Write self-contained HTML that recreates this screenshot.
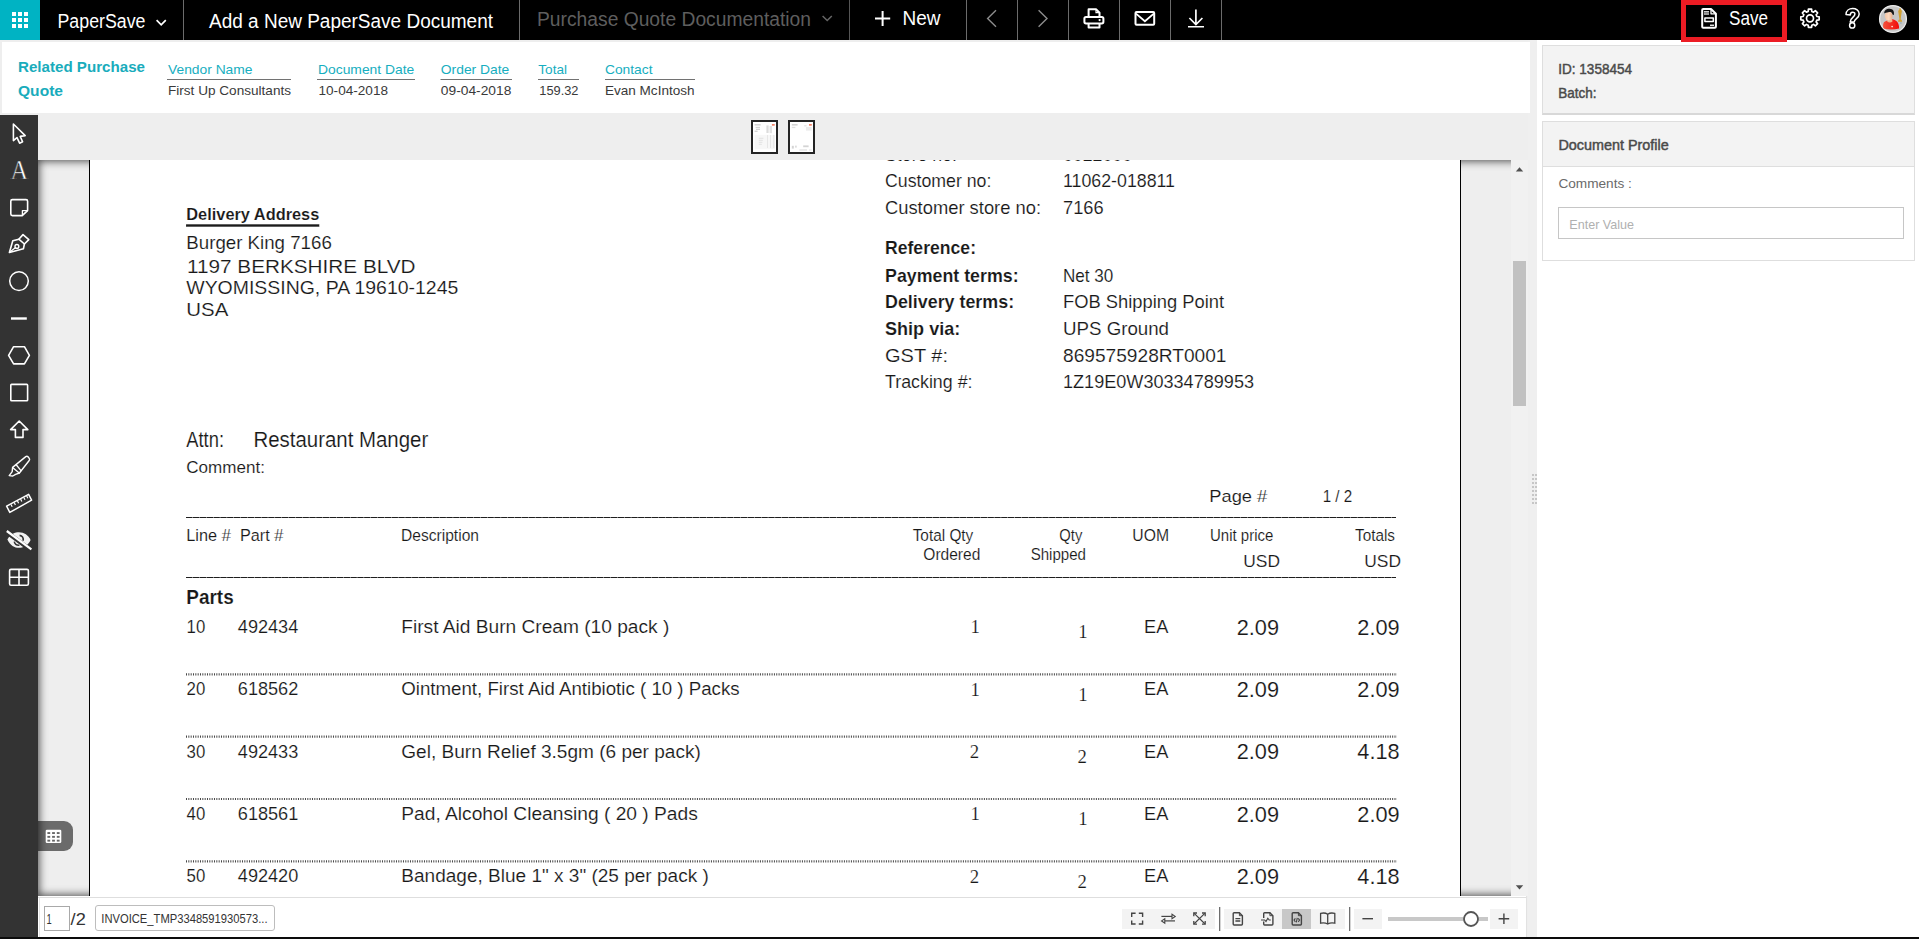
<!DOCTYPE html>
<html lang="en">
<head>
<meta charset="utf-8">
<title>PaperSave - Add a New PaperSave Document</title>
<style>
html,body{margin:0;padding:0;}
body{width:1919px;height:939px;overflow:hidden;background:#eee;position:relative;font-family:"Liberation Sans",sans-serif;}
.abs{position:absolute;box-sizing:border-box;}
#topbar{left:0;top:0;width:1919px;height:40px;background:#000;}
#apps{left:0;top:0;width:40px;height:40px;background:#00b3c3;}
.sep{top:0;width:1px;height:40px;background:#6b6b6b;}
#savebox{left:1681px;top:0;width:106px;height:42px;border:5px solid #ec1c24;}
#header{left:2px;top:42px;width:1528px;height:71px;background:#fff;}
#right{left:1537px;top:40px;width:382px;height:897px;background:#fff;}
#card1{left:1542px;top:45px;width:373px;height:70px;background:#f3f3f3;border:1px solid #dedede;border-bottom:2px solid #d8d8d8;}
#card2{left:1542px;top:121px;width:373px;height:140px;background:#fff;border:1px solid #dedede;}
#card2h{left:1543px;top:122px;width:371px;height:45px;background:#f3f3f3;border-bottom:1px solid #dedede;}
#cinput{left:1558px;top:207px;width:346px;height:32px;background:#fff;border:1px solid #c6c6c6;}
#sidebar{left:0;top:115px;width:38px;height:822px;background:#333;}
#viewer{left:38px;top:160px;width:1490px;height:736px;background:#eee;overflow:hidden;}
#vshadow{left:0;top:0;width:1490px;height:736px;box-shadow:inset 0 0 9px 1px rgba(0,0,0,.7);}
#page{left:51px;top:-20px;width:1372px;height:800px;background:#fff;border-left:1px solid #000;border-right:1px solid #000;}
#vtrack{left:1511px;top:160px;width:17px;height:736px;background:#f1f1f1;}
#vthumb{left:1513px;top:261px;width:13px;height:145px;background:#c1c1c1;}
#tab{left:0;top:661px;width:35px;height:30px;background:#6b6b6b;border-radius:0 9px 9px 0;}
#bottombar{left:38px;top:896px;width:1489px;height:41px;background:#fff;border-right:1px solid #e2e2e2;}
#bbline{left:38px;top:897px;width:1488px;height:1px;background:#dedede;}
#band{left:1528px;top:40px;width:9px;height:897px;background:#efefef;}
#blackline{left:0;top:937px;width:1919px;height:2px;background:#0c0c0c;}
.tbg{top:909px;height:20px;background:#f3f3f3;}
#pgin{left:44px;top:906px;width:26px;height:25px;background:#fff;border:1px solid #a9a9a9;}
#fname{left:95px;top:905px;width:180px;height:26px;background:#fff;border:1px solid #bdbdbd;border-radius:3px;}
.thumb{top:120px;width:27px;height:34px;background:#fff;border:2px solid #242424;}
svg{position:absolute;left:0;top:0;}
svg text{font-family:"Liberation Sans",sans-serif;white-space:pre;}
svg text.sf{font-family:"Liberation Serif",serif;}
</style>
</head>
<body>
<div class="abs" id="topbar"></div>
<div class="abs" id="apps"></div>
<div class="abs sep" style="left:183px"></div>
<div class="abs sep" style="left:519px"></div>
<div class="abs sep" style="left:849px;background:#555"></div>
<div class="abs sep" style="left:966px"></div>
<div class="abs sep" style="left:1017px"></div>
<div class="abs sep" style="left:1068px"></div>
<div class="abs sep" style="left:1119px"></div>
<div class="abs sep" style="left:1170px"></div>
<div class="abs sep" style="left:1221px"></div>
<div class="abs" id="band"></div>
<div class="abs" id="header"></div>
<div class="abs" id="right"></div>
<div class="abs" id="savebox"></div>
<div class="abs" id="card1"></div>
<div class="abs" id="card2"></div>
<div class="abs" id="card2h"></div>
<div class="abs" id="cinput"></div>
<div class="abs thumb" style="left:751px"></div>
<div class="abs thumb" style="left:788px"></div>
<div class="abs" id="viewer"><div class="abs" id="tab"></div><div class="abs" id="vshadow"></div><div class="abs" id="page"></div></div>
<div class="abs" id="vtrack"></div>
<div class="abs" id="vthumb"></div>
<div class="abs" id="sidebar"></div>
<div class="abs" id="bottombar"></div>
<div class="abs" id="bbline"></div>
<div class="abs" style="left:39px;top:898px;width:1px;height:39px;background:#e3e3e3"></div>
<div class="abs tbg" style="left:1122px;width:93px"></div>
<div class="abs tbg" style="left:1224px;width:121px"></div>
<div class="abs tbg" style="left:1282px;width:29px;background:#c8c8c8"></div>
<div class="abs tbg" style="left:1354px;width:28px"></div>
<div class="abs tbg" style="left:1490px;width:28px"></div>
<div class="abs" id="pgin"></div>
<div class="abs" id="fname"></div>
<div class="abs" id="blackline"></div>

<svg width="1919" height="939" viewBox="0 0 1919 939">
<defs><clipPath id="docclip"><rect x="90" y="160" width="1370" height="736"/></clipPath></defs>
<g id="doc" clip-path="url(#docclip)" stroke="#fff" stroke-width="0.14">
<text x="885" y="161.1" font-size="18.2" fill="#181818" textLength="72" lengthAdjust="spacingAndGlyphs">Store no:</text>
<text x="1063" y="161.1" font-size="18.2" fill="#181818" textLength="69" lengthAdjust="spacingAndGlyphs">0022000</text>
<text x="885" y="187" font-size="18.2" fill="#181818" textLength="106.4" lengthAdjust="spacingAndGlyphs">Customer no:</text>
<text x="1063" y="187" font-size="18.2" fill="#181818" textLength="112" lengthAdjust="spacingAndGlyphs">11062-018811</text>
<text x="885" y="213.6" font-size="18.2" fill="#181818" textLength="156" lengthAdjust="spacingAndGlyphs">Customer store no:</text>
<text x="1063" y="213.6" font-size="18.2" fill="#181818" textLength="40.6" lengthAdjust="spacingAndGlyphs">7166</text>
<text x="885" y="254" font-size="18.2" fill="#181818" textLength="91" lengthAdjust="spacingAndGlyphs" font-weight="bold">Reference:</text>
<text x="885" y="281.7" font-size="18.2" fill="#181818" textLength="133.6" lengthAdjust="spacingAndGlyphs" font-weight="bold">Payment terms:</text>
<text x="1063" y="281.7" font-size="18.2" fill="#181818" textLength="50.3" lengthAdjust="spacingAndGlyphs">Net 30</text>
<text x="885" y="307.8" font-size="18.2" fill="#181818" textLength="129.1" lengthAdjust="spacingAndGlyphs" font-weight="bold">Delivery terms:</text>
<text x="1063" y="307.8" font-size="18.2" fill="#181818" textLength="161" lengthAdjust="spacingAndGlyphs">FOB Shipping Point</text>
<text x="885" y="334.9" font-size="18.2" fill="#181818" textLength="75.3" lengthAdjust="spacingAndGlyphs" font-weight="bold">Ship via:</text>
<text x="1063" y="334.9" font-size="18.2" fill="#181818" textLength="106" lengthAdjust="spacingAndGlyphs">UPS Ground</text>
<text x="885" y="361.7" font-size="18.2" fill="#181818" textLength="63" lengthAdjust="spacingAndGlyphs">GST #:</text>
<text x="1063" y="361.7" font-size="18.2" fill="#181818" textLength="163.5" lengthAdjust="spacingAndGlyphs">869575928RT0001</text>
<text x="885" y="387.7" font-size="18.2" fill="#181818" textLength="87.5" lengthAdjust="spacingAndGlyphs">Tracking #:</text>
<text x="1063" y="387.7" font-size="18.2" fill="#181818" textLength="191" lengthAdjust="spacingAndGlyphs">1Z19E0W30334789953</text>
<text x="186.3" y="220" font-size="16.6" fill="#181818" textLength="133" lengthAdjust="spacingAndGlyphs" font-weight="bold">Delivery Address</text>
<rect x="186" y="224.2" width="133.3" height="2.6" fill="#1c1c1c"/>
<text x="186.3" y="248.8" font-size="18.2" fill="#181818" textLength="145.5" lengthAdjust="spacingAndGlyphs">Burger King 7166</text>
<text x="187" y="272.7" font-size="17.5" fill="#181818" textLength="228.5" lengthAdjust="spacingAndGlyphs">1197 BERKSHIRE BLVD</text>
<text x="186.3" y="293.8" font-size="18.2" fill="#181818" textLength="272" lengthAdjust="spacingAndGlyphs">WYOMISSING, PA 19610-1245</text>
<text x="186.3" y="315.7" font-size="18.2" fill="#181818" textLength="42" lengthAdjust="spacingAndGlyphs">USA</text>
<text x="186.3" y="447.4" font-size="21.6" fill="#181818" textLength="37.7" lengthAdjust="spacingAndGlyphs">Attn:</text>
<text x="253.5" y="447.4" font-size="21.6" fill="#181818" textLength="174.7" lengthAdjust="spacingAndGlyphs">Restaurant Manger</text>
<text x="186.3" y="473.2" font-size="16.8" fill="#181818" textLength="78.6" lengthAdjust="spacingAndGlyphs">Comment:</text>
<text x="1209.3" y="501.7" font-size="17" fill="#181818" textLength="58" lengthAdjust="spacingAndGlyphs">Page #</text>
<text x="1322.7" y="501.7" font-size="17" fill="#181818" textLength="29.6" lengthAdjust="spacingAndGlyphs">1 / 2</text>
<line x1="186" x2="1396" y1="517.5" y2="517.5" stroke="#1e1e1e" stroke-width="1.2" stroke-dasharray="6.45 0.4"/>
<line x1="186" x2="1396" y1="577.5" y2="577.5" stroke="#1e1e1e" stroke-width="1.2" stroke-dasharray="6.45 0.4"/>
<text x="186.3" y="540.7" font-size="17.1" fill="#181818" textLength="44.4" lengthAdjust="spacingAndGlyphs">Line #</text>
<text x="240" y="540.7" font-size="17.1" fill="#181818" textLength="43.3" lengthAdjust="spacingAndGlyphs">Part #</text>
<text x="401" y="540.7" font-size="17.1" fill="#181818" textLength="78" lengthAdjust="spacingAndGlyphs">Description</text>
<text x="912.7" y="540.7" font-size="17.1" fill="#181818" textLength="60.6" lengthAdjust="spacingAndGlyphs">Total Qty</text>
<text x="923.3" y="560" font-size="17.1" fill="#181818" textLength="57" lengthAdjust="spacingAndGlyphs">Ordered</text>
<text x="1059.3" y="540.7" font-size="17.1" fill="#181818" textLength="23" lengthAdjust="spacingAndGlyphs">Qty</text>
<text x="1030.7" y="560" font-size="17.1" fill="#181818" textLength="55.3" lengthAdjust="spacingAndGlyphs">Shipped</text>
<text x="1132.3" y="540.7" font-size="17.1" fill="#181818" textLength="36.7" lengthAdjust="spacingAndGlyphs">UOM</text>
<text x="1210" y="540.7" font-size="17.1" fill="#181818" textLength="63.3" lengthAdjust="spacingAndGlyphs">Unit price</text>
<text x="1355" y="540.7" font-size="17.1" fill="#181818" textLength="40" lengthAdjust="spacingAndGlyphs">Totals</text>
<text x="1243.3" y="567.3" font-size="17" fill="#181818" textLength="36.7" lengthAdjust="spacingAndGlyphs">USD</text>
<text x="1364.3" y="567.3" font-size="17" fill="#181818" textLength="36.7" lengthAdjust="spacingAndGlyphs">USD</text>
<text x="186.3" y="604.2" font-size="20.6" fill="#181818" textLength="47.4" lengthAdjust="spacingAndGlyphs" font-weight="bold">Parts</text>
<text x="186.6" y="632.9" font-size="17.6" fill="#181818" textLength="18.7" lengthAdjust="spacingAndGlyphs">10</text>
<text x="237.8" y="632.9" font-size="17.6" fill="#181818" textLength="60.5" lengthAdjust="spacingAndGlyphs">492434</text>
<text x="401.3" y="632.9" font-size="17.6" fill="#181818" textLength="268" lengthAdjust="spacingAndGlyphs">First Aid Burn Cream (10 pack )</text>
<text x="970.6" y="633.3" font-size="18.8" fill="#181818" class="sf">1</text>
<text x="1078.2" y="638.3" font-size="18.8" fill="#181818" class="sf">1</text>
<text x="1144" y="632.9" font-size="17.6" fill="#181818" textLength="24.3" lengthAdjust="spacingAndGlyphs">EA</text>
<text x="1236.7" y="634.6999999999999" font-size="21.5" fill="#181818" textLength="42.3" lengthAdjust="spacingAndGlyphs">2.09</text>
<text x="1357.3" y="634.6999999999999" font-size="21.5" fill="#181818" textLength="42.3" lengthAdjust="spacingAndGlyphs">2.09</text>
<line x1="186" x2="1397" y1="674.4" y2="674.4" stroke="#484848" stroke-width="2.2" stroke-dasharray="1 1.333"/>
<text x="186.6" y="695.1999999999999" font-size="17.6" fill="#181818" textLength="18.7" lengthAdjust="spacingAndGlyphs">20</text>
<text x="237.8" y="695.1999999999999" font-size="17.6" fill="#181818" textLength="60.5" lengthAdjust="spacingAndGlyphs">618562</text>
<text x="401.3" y="695.1999999999999" font-size="17.6" fill="#181818" textLength="338.3" lengthAdjust="spacingAndGlyphs">Ointment, First Aid Antibiotic ( 10 ) Packs</text>
<text x="970.6" y="695.5999999999999" font-size="18.8" fill="#181818" class="sf">1</text>
<text x="1078.2" y="700.5999999999999" font-size="18.8" fill="#181818" class="sf">1</text>
<text x="1144" y="695.1999999999999" font-size="17.6" fill="#181818" textLength="24.3" lengthAdjust="spacingAndGlyphs">EA</text>
<text x="1236.7" y="696.9999999999999" font-size="21.5" fill="#181818" textLength="42.3" lengthAdjust="spacingAndGlyphs">2.09</text>
<text x="1357.3" y="696.9999999999999" font-size="21.5" fill="#181818" textLength="42.3" lengthAdjust="spacingAndGlyphs">2.09</text>
<line x1="186" x2="1397" y1="736.7" y2="736.7" stroke="#484848" stroke-width="2.2" stroke-dasharray="1 1.333"/>
<text x="186.6" y="757.5" font-size="17.6" fill="#181818" textLength="18.7" lengthAdjust="spacingAndGlyphs">30</text>
<text x="237.8" y="757.5" font-size="17.6" fill="#181818" textLength="60.5" lengthAdjust="spacingAndGlyphs">492433</text>
<text x="401.3" y="757.5" font-size="17.6" fill="#181818" textLength="299.5" lengthAdjust="spacingAndGlyphs">Gel, Burn Relief 3.5gm (6 per pack)</text>
<text x="969.8" y="757.9" font-size="18.8" fill="#181818" class="sf">2</text>
<text x="1077.4" y="762.9" font-size="18.8" fill="#181818" class="sf">2</text>
<text x="1144" y="757.5" font-size="17.6" fill="#181818" textLength="24.3" lengthAdjust="spacingAndGlyphs">EA</text>
<text x="1236.7" y="759.3" font-size="21.5" fill="#181818" textLength="42.3" lengthAdjust="spacingAndGlyphs">2.09</text>
<text x="1357.3" y="759.3" font-size="21.5" fill="#181818" textLength="42.3" lengthAdjust="spacingAndGlyphs">4.18</text>
<line x1="186" x2="1397" y1="799.0" y2="799.0" stroke="#484848" stroke-width="2.2" stroke-dasharray="1 1.333"/>
<text x="186.6" y="819.8" font-size="17.6" fill="#181818" textLength="18.7" lengthAdjust="spacingAndGlyphs">40</text>
<text x="237.8" y="819.8" font-size="17.6" fill="#181818" textLength="60.5" lengthAdjust="spacingAndGlyphs">618561</text>
<text x="401.3" y="819.8" font-size="17.6" fill="#181818" textLength="296.5" lengthAdjust="spacingAndGlyphs">Pad, Alcohol Cleansing ( 20 ) Pads</text>
<text x="970.6" y="820.1999999999999" font-size="18.8" fill="#181818" class="sf">1</text>
<text x="1078.2" y="825.1999999999999" font-size="18.8" fill="#181818" class="sf">1</text>
<text x="1144" y="819.8" font-size="17.6" fill="#181818" textLength="24.3" lengthAdjust="spacingAndGlyphs">EA</text>
<text x="1236.7" y="821.5999999999999" font-size="21.5" fill="#181818" textLength="42.3" lengthAdjust="spacingAndGlyphs">2.09</text>
<text x="1357.3" y="821.5999999999999" font-size="21.5" fill="#181818" textLength="42.3" lengthAdjust="spacingAndGlyphs">2.09</text>
<line x1="186" x2="1397" y1="861.3" y2="861.3" stroke="#484848" stroke-width="2.2" stroke-dasharray="1 1.333"/>
<text x="186.6" y="882.0999999999999" font-size="17.6" fill="#181818" textLength="18.7" lengthAdjust="spacingAndGlyphs">50</text>
<text x="237.8" y="882.0999999999999" font-size="17.6" fill="#181818" textLength="60.5" lengthAdjust="spacingAndGlyphs">492420</text>
<text x="401.3" y="882.0999999999999" font-size="17.6" fill="#181818" textLength="307.5" lengthAdjust="spacingAndGlyphs">Bandage, Blue 1&quot; x 3&quot; (25 per pack )</text>
<text x="969.8" y="882.4999999999999" font-size="18.8" fill="#181818" class="sf">2</text>
<text x="1077.4" y="887.4999999999999" font-size="18.8" fill="#181818" class="sf">2</text>
<text x="1144" y="882.0999999999999" font-size="17.6" fill="#181818" textLength="24.3" lengthAdjust="spacingAndGlyphs">EA</text>
<text x="1236.7" y="883.8999999999999" font-size="21.5" fill="#181818" textLength="42.3" lengthAdjust="spacingAndGlyphs">2.09</text>
<text x="1357.3" y="883.8999999999999" font-size="21.5" fill="#181818" textLength="42.3" lengthAdjust="spacingAndGlyphs">4.18</text>
</g>
<g id="toptext">
<text x="57.5" y="27.5" font-size="19.6" fill="#fff" textLength="88" lengthAdjust="spacingAndGlyphs">PaperSave</text>
<text x="209" y="27.5" font-size="19.6" fill="#fff" textLength="284" lengthAdjust="spacingAndGlyphs">Add a New PaperSave Document</text>
<text x="537" y="25.8" font-size="19.6" fill="#5e5e5e" textLength="274" lengthAdjust="spacingAndGlyphs">Purchase Quote Documentation</text>
<text x="902.5" y="25" font-size="20" fill="#fff" textLength="38" lengthAdjust="spacingAndGlyphs">New</text>
<text x="1729" y="25" font-size="20" fill="#fff" textLength="39" lengthAdjust="spacingAndGlyphs">Save</text>
</g>
<g id="headtext">
<text x="18" y="72" font-size="15.4" fill="#19acbc" textLength="127" lengthAdjust="spacingAndGlyphs" font-weight="bold">Related Purchase</text>
<text x="18" y="95.5" font-size="15.4" fill="#19acbc" textLength="45" lengthAdjust="spacingAndGlyphs" font-weight="bold">Quote</text>
<text x="168" y="73.8" font-size="13.4" fill="#16aec0" textLength="84.5" lengthAdjust="spacingAndGlyphs">Vendor Name</text>
<rect x="167" y="79" width="124" height="1" fill="#727272"/>
<text x="168" y="95" font-size="13.4" fill="#3a3a3a" textLength="123" lengthAdjust="spacingAndGlyphs">First Up Consultants</text>
<text x="318" y="73.8" font-size="13.4" fill="#16aec0" textLength="96.3" lengthAdjust="spacingAndGlyphs">Document Date</text>
<rect x="317" y="79" width="98" height="1" fill="#727272"/>
<text x="318.5" y="95" font-size="13.4" fill="#3a3a3a" textLength="69.5" lengthAdjust="spacingAndGlyphs">10-04-2018</text>
<text x="440.8" y="73.8" font-size="13.4" fill="#16aec0" textLength="68.5" lengthAdjust="spacingAndGlyphs">Order Date</text>
<rect x="440.5" y="79" width="71.5" height="1" fill="#727272"/>
<text x="440.8" y="95" font-size="13.4" fill="#3a3a3a" textLength="70.5" lengthAdjust="spacingAndGlyphs">09-04-2018</text>
<text x="538.3" y="73.8" font-size="13.4" fill="#16aec0" textLength="28.7" lengthAdjust="spacingAndGlyphs">Total</text>
<rect x="538" y="79" width="41" height="1" fill="#727272"/>
<text x="539.3" y="95" font-size="13.4" fill="#3a3a3a" textLength="39.2" lengthAdjust="spacingAndGlyphs">159.32</text>
<text x="605" y="73.8" font-size="13.4" fill="#16aec0" textLength="47.5" lengthAdjust="spacingAndGlyphs">Contact</text>
<rect x="605" y="79" width="90" height="1" fill="#727272"/>
<text x="605" y="95" font-size="13.4" fill="#3a3a3a" textLength="89.5" lengthAdjust="spacingAndGlyphs">Evan McIntosh</text>
</g>
<g id="righttext">
<text x="1558.3" y="73.9" font-size="14.1" fill="#4a4a4a" textLength="73.7" lengthAdjust="spacingAndGlyphs" stroke="#4a4a4a" stroke-width="0.45">ID: 1358454</text>
<text x="1558.3" y="97.9" font-size="14.1" fill="#4a4a4a" textLength="38.2" lengthAdjust="spacingAndGlyphs" stroke="#4a4a4a" stroke-width="0.45">Batch:</text>
<text x="1558.4" y="149.7" font-size="13.8" fill="#4a4a4a" textLength="110.3" lengthAdjust="spacingAndGlyphs" stroke="#4a4a4a" stroke-width="0.45">Document Profile</text>
<text x="1558.4" y="187.6" font-size="13.5" fill="#6a6a6a" textLength="73.5" lengthAdjust="spacingAndGlyphs">Comments :</text>
<text x="1569.3" y="228.8" font-size="13.4" fill="#b0b0b0" textLength="64.7" lengthAdjust="spacingAndGlyphs">Enter Value</text>
</g>
<g id="bottext">
<text x="46.6" y="923.7" font-size="14" fill="#333" textLength="5.2" lengthAdjust="spacingAndGlyphs">1</text>
<text x="70.6" y="924.6" font-size="15.8" fill="#333" textLength="15.2" lengthAdjust="spacingAndGlyphs">/2</text>
<text x="101.3" y="923.3" font-size="12.6" fill="#333" textLength="166.2" lengthAdjust="spacingAndGlyphs">INVOICE_TMP3348591930573...</text>
</g>
<g id="icons">
<!-- app grid -->
<g fill="#fff">
<rect x="12" y="12" width="4" height="4"/><rect x="18" y="12" width="4" height="4"/><rect x="24" y="12" width="4" height="4"/>
<rect x="12" y="18" width="4" height="4"/><rect x="18" y="18" width="4" height="4"/><rect x="24" y="18" width="4" height="4"/>
<rect x="12" y="24" width="4" height="4"/><rect x="18" y="24" width="4" height="4"/><rect x="24" y="24" width="4" height="4"/>
</g>
<!-- chevrons -->
<path d="M156.6 20.2 L161.2 24.8 L165.8 20.2" fill="none" stroke="#fff" stroke-width="1.7"/>
<path d="M822.6 16 L827.2 20.5 L831.8 16" fill="none" stroke="#666" stroke-width="1.5"/>
<!-- plus -->
<path d="M882.6 11 V26 M875 18.5 H890.2" fill="none" stroke="#fff" stroke-width="2"/>
<!-- prev / next -->
<path d="M996 10.2 L987.6 18.5 L996 26.8" fill="none" stroke="#8c8c8c" stroke-width="1.4"/>
<path d="M1038.6 10.2 L1047 18.5 L1038.6 26.8" fill="none" stroke="#8c8c8c" stroke-width="1.4"/>
<!-- printer -->
<g fill="none" stroke="#fff" stroke-width="2" stroke-linejoin="round">
<path d="M1088.6 16.5 V9.2 H1096 L1099.5 12.7 V16.5"/>
<rect x="1084.4" y="17" width="19" height="6.4" rx="1.6"/>
<path d="M1088.6 24 V27.6 H1099.5 V24"/>
</g>
<path d="M1096 9.2 V12.7 H1099.5" fill="none" stroke="#fff" stroke-width="1.2"/>
<circle cx="1099.6" cy="20.1" r="1.1" fill="#fff"/>
<!-- mail -->
<rect x="1135.5" y="12.1" width="18.7" height="12.7" rx="1" fill="none" stroke="#fff" stroke-width="2"/>
<path d="M1136 13.6 L1144.9 21.2 L1153.8 13.6" fill="none" stroke="#fff" stroke-width="1.8"/>
<!-- download -->
<path d="M1195.9 9.4 V24.2 M1189.4 18 L1195.9 24.5 L1202.4 18" fill="none" stroke="#fff" stroke-width="1.7"/>
<rect x="1188" y="26" width="16" height="1.5" fill="#fff"/>
<!-- save icon -->
<g fill="none" stroke="#fff" stroke-linejoin="round">
<path d="M1702.2 10 Q1702.2 9 1703.2 9 H1711 L1715.9 13.8 V26.8 Q1715.9 27.8 1714.9 27.8 H1703.2 Q1702.2 27.8 1702.2 26.8 Z" stroke-width="2"/>
<path d="M1711 9 V13.8 H1715.9" stroke-width="1.3"/>
<rect x="1704.9" y="17.9" width="8.4" height="3.6" stroke-width="1.5"/>
</g>
<rect x="1704" y="11.2" width="5" height="1.3" fill="#fff"/><rect x="1704" y="13.4" width="5" height="1.2" fill="#fff"/>
<rect x="1710" y="24.6" width="4" height="1.3" fill="#fff"/>
<!-- gear -->
<g transform="translate(1810 18.3)" fill="none" stroke="#fff" stroke-width="1.7" stroke-linejoin="round">
<path id="gearp" d="M6.86 -1.83 L9.17 -1.57 L9.17 1.57 L6.86 1.83 L6.14 3.56 L7.59 5.37 L5.37 7.59 L3.56 6.14 L1.83 6.86 L1.57 9.17 L-1.57 9.17 L-1.83 6.86 L-3.56 6.14 L-5.37 7.59 L-7.59 5.37 L-6.14 3.56 L-6.86 1.83 L-9.17 1.57 L-9.17 -1.57 L-6.86 -1.83 L-6.14 -3.56 L-7.59 -5.37 L-5.37 -7.59 L-3.56 -6.14 L-1.83 -6.86 L-1.57 -9.17 L1.57 -9.17 L1.83 -6.86 L3.56 -6.14 L5.37 -7.59 L7.59 -5.37 L6.14 -3.56 Z"/>
<circle r="3.5"/>
</g>
<!-- help -->
<g fill="none" stroke="#fff" stroke-width="1.5" stroke-linejoin="round">
<path d="M1846 14.6 C1846 6.6 1859.2 6.8 1859.2 13.9 C1859.2 18.6 1854.2 18.4 1854.2 22 L1850.2 22 C1850.2 17.6 1854.9 17.3 1854.9 14 C1854.9 11.6 1850.3 11.6 1850.3 14.9 Z"/>
<circle cx="1852.2" cy="25.4" r="2.6"/>
</g>
<!-- avatar -->
<defs><clipPath id="avc"><circle cx="1893" cy="19" r="13.2"/></clipPath>
<linearGradient id="shirt" x1="0" x2="1" y1="0" y2="0"><stop offset="0" stop-color="#f4523c"/><stop offset="1" stop-color="#f20a08"/></linearGradient>
<linearGradient id="skin" x1="0" x2="1" y1="0" y2="0"><stop offset="0" stop-color="#f6c5a4"/><stop offset="0.5" stop-color="#fbd9c0"/><stop offset="1" stop-color="#e8ae8a"/></linearGradient></defs>
<circle cx="1893" cy="19" r="13.4" fill="#c6c6c6" stroke="#ececec" stroke-width="1.3"/>
<g clip-path="url(#avc)">
<path d="M1883.4 28.6 C1882.6 24 1883.4 21.6 1886.6 20.8 L1890.4 20 L1892.8 19.3 C1897 20.6 1899.2 23 1899.1 28.6 C1894 29.8 1888 29.8 1883.4 28.6 Z" fill="url(#shirt)"/>
<path d="M1887.6 19 L1891.6 18.4 L1892.6 21.2 C1891 22.8 1888.6 22.8 1887.2 21.4 Z" fill="#f0b592"/>
<ellipse cx="1888.7" cy="15.9" rx="3.8" ry="4.6" fill="url(#skin)"/>
<path d="M1884.3 13.6 C1883.8 10.4 1886.6 8.7 1889.6 8.8 C1893 8.9 1894.6 11.4 1893.8 15 C1893.4 15.4 1892.9 14.6 1892.4 14.2 C1891.8 12.2 1890.6 11.9 1888.4 12.2 C1886.4 12.4 1885.2 12.6 1884.3 13.6 Z" fill="#151515"/>
<path d="M1899.4 8.3 C1900.6 7.8 1901.3 8.6 1900.9 9.7 C1902 10.2 1902.1 11.4 1901.6 12.6 L1901 16.6 L1900.7 19.6 C1901.8 20 1902.2 20.8 1902.1 21.8 L1898 21.8 C1897.9 20.8 1898.4 20 1899.5 19.6 L1899 16.6 L1898.4 12.6 C1898 11.4 1898.2 10.2 1899.3 9.7 Z" fill="#d2a132"/>
<rect x="1900.2" y="22" width="1.4" height="2" fill="#9fb3bb"/>
<circle cx="1892.1" cy="26.6" r="0.8" fill="#fff"/>
</g>
<!-- sidebar icons -->
<g fill="none" stroke="#fff" stroke-width="1.6" stroke-linejoin="round" stroke-linecap="round">
<!-- cursor -->
<path d="M13.4 124 V140.6 L17 137.6 L19.6 143.2 L22.6 141.8 L20.2 136.4 L25.2 135.6 Z"/>
<!-- sticky note -->
<path d="M12.4 199.6 H26 Q27.6 199.6 27.6 201.2 V210.6 L22.2 215.6 H12.4 Q10.8 215.6 10.8 214 V201.2 Q10.8 199.6 12.4 199.6 Z"/>
<path d="M27.4 210.6 H22.4 V215.4" stroke-width="1.3"/>
<!-- pen nib -->
<path d="M23 234.6 L28.8 239.6 L24.4 244 L18.8 239.2 Z"/>
<path d="M18.8 239.2 L12.8 240.8 L9.4 252.4 L23.4 248.8 L24.4 244"/>
<path d="M9.6 252.2 L15.6 247.6" stroke-width="1.3"/>
<circle cx="16.9" cy="246.4" r="1.9" stroke-width="1.4"/>
<!-- circle -->
<circle cx="19" cy="281.1" r="9.3" stroke-width="1.5"/>
<!-- hexagon -->
<path d="M8.6 355.3 L13.6 346.7 H24.4 L29.4 355.3 L24.4 363.9 H13.6 Z"/>
<!-- square -->
<rect x="10.8" y="384.4" width="16.8" height="16.4" rx="0.8"/>
<!-- arrow up -->
<path d="M19.2 421 L27.8 429.6 H23 V437.4 H15.4 V429.6 H10.6 Z"/>
<!-- highlighter -->
<path d="M25.8 456.6 Q27 455.8 28 456.8 L29.4 458.6 Q30 459.8 29 460.8 L19.4 473 L15.6 474.4 L12.8 476 L9.2 475.6 L12.2 471.6 L12.6 467.4 Z" stroke-width="1.4"/>
<path d="M16.4 465 L21 470.6 M12.6 467.6 L19.2 473" stroke-width="1.3"/>
<!-- ruler -->
<path d="M6.6 506.2 L28.6 494.4 L31.6 500.2 L9.8 512.4 Z" stroke-width="1.5"/>
<path d="M11 504.4 L12.2 506.8 M14.2 502.6 L15.4 505 M17.4 500.8 L18.6 503.2 M20.6 499 L21.8 501.4 M23.8 497.4 L25 499.8 M26.6 495.8 L27.8 498.2" stroke-width="1.2" stroke-linecap="butt"/>
<!-- 2x2 grid -->
<rect x="9.6" y="569.4" width="18.8" height="15.8" rx="1.4"/>
<path d="M19 569.4 V585.2 M9.6 577.3 H28.4" stroke-linecap="butt"/>
</g>
<!-- line tool -->
<rect x="11" y="317.3" width="15.8" height="2.4" fill="#fff"/>
<!-- eye slash -->
<path d="M7.4 539.4 C10.6 533.6 15 532.2 19 532.2 C24 532.2 28.4 535.2 30.6 540 C28.4 545 24 547.8 19 547.8 C14.6 547.8 10 545.4 7.4 539.4 Z" fill="#f2f2f2"/>
<path d="M19.6 535.4 C22.4 535.6 23.8 538.2 23 540.8" fill="none" stroke="#333" stroke-width="1.6"/>
<path d="M14.2 541.6 C14.8 544 17 545.4 19.4 545.2" fill="none" stroke="#333" stroke-width="1.5"/>
<path d="M6.2 531.8 L31.6 550.8" fill="none" stroke="#333" stroke-width="4.2"/>
<path d="M6.8 531 L31.4 549.4" fill="none" stroke="#fff" stroke-width="2.2"/>
<!-- tab icon -->
<rect x="45.7" y="829.7" width="15.6" height="13.4" rx="1.3" fill="#fff"/>
<g fill="#666">
<rect x="47.4" y="832.1" width="2.8" height="1.9"/><rect x="52.1" y="832.1" width="2.8" height="1.9"/><rect x="56.8" y="832.1" width="2.8" height="1.9"/>
<rect x="47.4" y="835.9" width="2.8" height="1.9"/><rect x="52.1" y="835.9" width="2.8" height="1.9"/><rect x="56.8" y="835.9" width="2.8" height="1.9"/>
<rect x="47.4" y="839.7" width="2.8" height="1.9"/><rect x="52.1" y="839.7" width="2.8" height="1.9"/><rect x="56.8" y="839.7" width="2.8" height="1.9"/>
</g>
<!-- bottom toolbar icons -->
<g fill="none" stroke="#444" stroke-width="1.4">
<!-- fit corners -->
<path d="M1131.7 917 V913.3 H1135.6 M1138.8 913.3 H1142.6 V917 M1142.6 920.4 V924 H1138.8 M1135.6 924 H1131.7 V920.4"/>
<!-- swap -->
<path d="M1161.4 916.4 H1172" stroke-width="1.2"/>
<path d="M1172 914.3 L1175.2 916.4 L1172 918.6 Z" stroke-width="1.1"/>
<path d="M1175 920.9 H1164.8" stroke-width="1.2"/>
<path d="M1164.8 918.7 L1161.6 920.9 L1164.8 923.1 Z" stroke-width="1.1"/>
<!-- expand -->
<path d="M1194.2 913.4 L1204.8 923.8 M1204.8 913.4 L1194.2 923.8" stroke-width="1.2"/>
<path d="M1193.8 916.2 V913 H1197 M1202 913 H1205.2 V916.2 M1205.2 921 V924.2 H1202 M1197 924.2 H1193.8 V921" stroke-width="1.3"/>
<!-- doc 1 -->
<path d="M1233.2 913.6 Q1233.2 912.7 1234.1 912.7 H1239.4 L1242.4 915.7 V924.1 Q1242.4 925 1241.5 925 H1234.1 Q1233.2 925 1233.2 924.1 Z"/>
<path d="M1239.4 912.7 V915.7 H1242.4" stroke-width="1"/>
<path d="M1235.4 918.7 H1240.3 M1235.4 921 H1240.3" stroke-width="1.3"/>
<!-- doc 2 -->
<path d="M1263.7 918 V913.6 Q1263.7 912.7 1264.6 912.7 H1269.9 L1272.9 915.7 V924.1 Q1272.9 925 1272 925 H1264.6 Q1263.7 925 1263.7 924.1 V921.6"/>
<path d="M1269.9 912.7 V915.7 H1272.9" stroke-width="1"/>
<path d="M1261 920 H1264.6 L1266 921.6 L1267.8 918.2 L1269.2 920 H1270.8" stroke-width="1.1"/>
<!-- doc 3 -->
<path d="M1292.2 913.6 Q1292.2 912.7 1293.1 912.7 H1298.4 L1301.4 915.7 V924.1 Q1301.4 925 1300.5 925 H1293.1 Q1292.2 925 1292.2 924.1 Z"/>
<path d="M1298.4 912.7 V915.7 H1301.4" stroke-width="1"/>
<path d="M1295.4 918.4 L1294 920.1 L1295.4 921.8 M1298.2 918.4 L1299.6 920.1 L1298.2 921.8 M1297.3 917.8 L1296.3 922.4" stroke-width="1.1"/>
<!-- book -->
<path d="M1327.7 914.2 C1325.6 912.8 1322.8 912.8 1320.6 913.4 V923.2 C1322.8 922.6 1325.6 922.8 1327.7 924 C1329.8 922.8 1332.6 922.6 1334.8 923.2 V913.4 C1332.6 912.8 1329.8 912.8 1327.7 914.2 Z M1327.7 914.2 V924" stroke-width="1.3"/>
<!-- minus / plus -->
<path d="M1362.4 918.7 H1373" stroke-width="1.4"/>
<path d="M1498.6 918.7 H1509.2 M1503.9 913.4 V924" stroke-width="1.4"/>
</g>
<!-- separators -->
<rect x="1219" y="907" width="1.3" height="24" fill="#6e6e6e"/>
<rect x="1349" y="907" width="1.3" height="24" fill="#6e6e6e"/>
<!-- slider -->
<rect x="1388" y="917" width="100" height="4" fill="#c8c8c8"/>
<circle cx="1471" cy="919" r="7" fill="#fff" stroke="#555" stroke-width="1.8"/>
<!-- scrollbar arrows -->
<path d="M1515.8 171.4 L1519.5 167.2 L1523.2 171.4 Z" fill="#505050"/>
<path d="M1515.8 885.2 L1519.5 889.4 L1523.2 885.2 Z" fill="#505050"/>
<!-- splitter dots -->
<g fill="#c6c6c6">
<rect x="1532" y="474" width="2" height="2"/><rect x="1535" y="474" width="2" height="2"/><rect x="1532" y="478" width="2" height="2"/><rect x="1535" y="478" width="2" height="2"/><rect x="1532" y="482" width="2" height="2"/><rect x="1535" y="482" width="2" height="2"/><rect x="1532" y="486" width="2" height="2"/><rect x="1535" y="486" width="2" height="2"/><rect x="1532" y="490" width="2" height="2"/><rect x="1535" y="490" width="2" height="2"/><rect x="1532" y="494" width="2" height="2"/><rect x="1535" y="494" width="2" height="2"/><rect x="1532" y="498" width="2" height="2"/><rect x="1535" y="498" width="2" height="2"/><rect x="1532" y="502" width="2" height="2"/><rect x="1535" y="502" width="2" height="2"/>
</g>
<!-- thumbnail contents -->
<g fill="#d4d4d4">
<rect x="754.6" y="124" width="6" height="1.6"/><rect x="755.6" y="126.8" width="4.4" height="1.4"/><rect x="756" y="128.8" width="4" height="1.2"/>
<rect x="754.6" y="130.6" width="3" height="1.4"/>
<rect x="766.4" y="125.4" width="2.2" height="7.6" fill="#dcdcdc"/><rect x="769.6" y="126" width="2.4" height="7.2" fill="#e2e2e2"/>
<rect x="791.8" y="124" width="5.8" height="1.6"/><rect x="791.8" y="126.8" width="3.6" height="1.3" fill="#e0e0e0"/>
<rect x="804.2" y="125.2" width="2.4" height="1.2" fill="#e2e2e2"/><rect x="806" y="127" width="5.6" height="3.6" fill="#ececec"/>
<rect x="791.8" y="145.8" width="2" height="2.8"/><rect x="795" y="145.6" width="1.8" height="2" fill="#dcdcdc"/>
<rect x="803.2" y="145.4" width="5.4" height="1.8"/><rect x="799.4" y="149.4" width="7.6" height="1.2" fill="#dedede"/><rect x="809" y="149.4" width="2.6" height="1.2" fill="#e4e4e4"/>
</g>
<g fill="#f7f7f7">
<rect x="754.6" y="134.8" width="20.4" height="14.4"/>
</g>
<g fill="#e2e2e2">
<rect x="758.8" y="137.8" width="4.6" height="1"/><rect x="758.8" y="139.8" width="4" height="1"/><rect x="758.8" y="141.8" width="3.6" height="1"/><rect x="758.8" y="143.8" width="3" height="1"/>
<rect x="767" y="135" width="0.8" height="13"/><rect x="770" y="135" width="0.8" height="13"/><rect x="773.4" y="135" width="0.8" height="13"/>
</g>
<rect x="771.9" y="124" width="2.8" height="1.7" fill="#f58468"/>
<rect x="809" y="124" width="2.8" height="1.7" fill="#f58468"/>
<text x="10.4" y="179.2" font-size="26.8" fill="#fff" textLength="17.6" lengthAdjust="spacingAndGlyphs" class="sf" stroke="#333" stroke-width="0.6">A</text>
</g>
</svg>
</body>
</html>
